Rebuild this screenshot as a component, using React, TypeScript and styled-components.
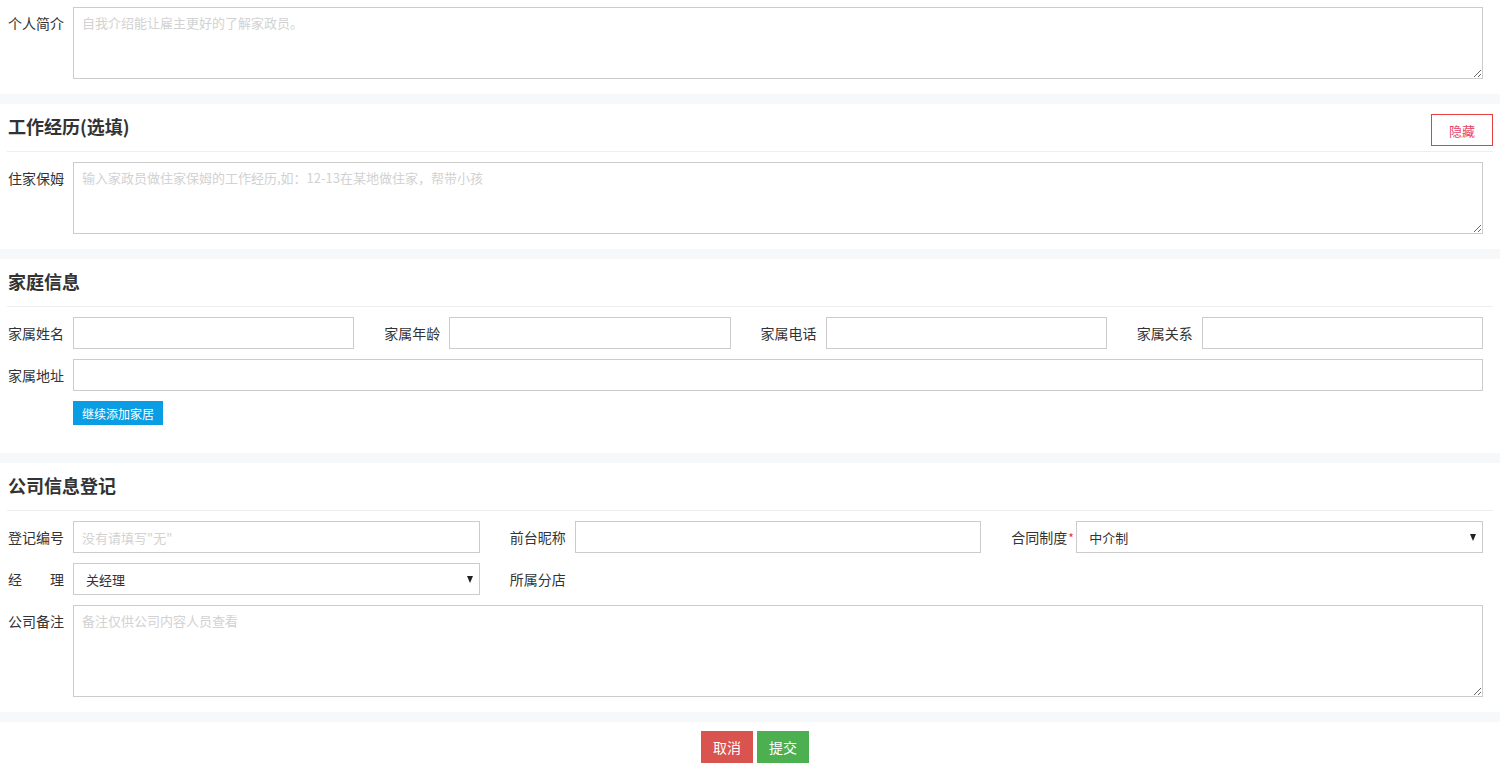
import React from 'react'
import styled, { createGlobalStyle } from 'styled-components'

const GlobalStyle = createGlobalStyle`
  body {
    margin: 0;
    background: #fff;
    font-family: "Noto Sans CJK SC", "Liberation Sans", sans-serif;
    color: #333;
  }
  * { box-sizing: border-box; }
`

const Page = styled.div`
  width: 1500px;
  display: flex;
  flex-direction: column;
`

const Section = styled.section<{ $top?: number }>`
  display: flex;
  flex-direction: column;
  gap: 10px;
  padding-top: ${(p) => p.$top ?? 0}px;
  padding-bottom: 15px;
`

const Band = styled.div`
  height: 10px;
  background: #f7f8fa;
`

const Header = styled.div`
  display: flex;
  align-items: center;
  justify-content: space-between;
  height: 48px;
  padding-top: 10px;
  padding-bottom: 5px;
  margin: 0 7px;
  border-bottom: 1px solid #eee;
`

const Title = styled.h3`
  margin: 0 0 8px 1px;
  font-size: 18px;
  line-height: 24px;
  font-weight: 700;
  color: #333;
`

const HideButton = styled.button`
  width: 62px;
  height: 32px;
  border: 1px solid #e53f3f;
  background: #fff;
  color: #e8456b;
  font-family: inherit;
  font-size: 13px;
  padding: 0;
  cursor: pointer;
`

const Grid = styled.div<{ $cols: number }>`
  display: grid;
  grid-template-columns: repeat(${(p) => p.$cols}, minmax(0, 1fr));
  column-gap: 30px;
  padding: 0 17px 0 8px;
`

const Field = styled.div<{ $top?: boolean }>`
  display: flex;
  align-items: ${(p) => (p.$top ? 'flex-start' : 'center')};
  min-height: 32px;
`

const Label = styled.label<{ $top?: boolean; $justify?: boolean }>`
  flex: 0 0 65px;
  font-size: 14px;
  line-height: 20px;
  color: #333;
  white-space: nowrap;
  padding-top: ${(p) => (p.$top ? 6 : 0)}px;
  ${(p) =>
    p.$justify &&
    `
    display: flex;
    justify-content: space-between;
    padding-right: 9px;
  `}
`

const Star = styled.span`
  color: #e33;
  font-size: 12px;
  margin-left: 1px;
`

const TextInput = styled.input`
  flex: 1;
  min-width: 0;
  height: 32px;
  border: 1px solid #ccc;
  padding: 0 8px;
  font-family: inherit;
  font-size: 13px;
  color: #333;
  outline: none;
  &::placeholder { color: #d2d2d2; }
`

const TextArea = styled.textarea<{ $h: number }>`
  flex: 1;
  min-width: 0;
  height: ${(p) => p.$h}px;
  border: 1px solid #ccc;
  padding: 5px 8px;
  font-family: inherit;
  font-size: 13px;
  line-height: 20px;
  color: #333;
  outline: none;
  &::placeholder { color: #d2d2d2; }
`

const SelectWrap = styled.div`
  flex: 1;
  min-width: 0;
  position: relative;
  display: flex;
`

const Select = styled.select`
  flex: 1;
  min-width: 0;
  height: 32px;
  border: 1px solid #ccc;
  background: #fff;
  padding: 0 12px;
  font-family: inherit;
  font-size: 13px;
  color: #333;
  appearance: none;
  outline: none;
`

const Arrow = styled.span`
  position: absolute;
  right: 7px;
  top: 13px;
  width: 0;
  height: 0;
  border-left: 3.5px solid transparent;
  border-right: 3.5px solid transparent;
  border-top: 7px solid #222;
  pointer-events: none;
`

const Plain = styled.span`
  font-size: 14px;
  color: #333;
`

const ActionRow = styled.div`
  display: flex;
  padding-left: 73px;
  margin-bottom: 13px;
`

const SmallButton = styled.button`
  height: 24px;
  padding: 0 9px;
  border: none;
  background: #0b9de3;
  color: #fff;
  font-family: inherit;
  font-size: 12px;
  cursor: pointer;
`

const Footer = styled.div`
  display: flex;
  justify-content: center;
  gap: 4px;
  padding: 9px 0 5px 10px;
`

const FooterButton = styled.button<{ $tone: 'danger' | 'success' }>`
  width: 52px;
  height: 32px;
  border: none;
  color: #fff;
  font-family: inherit;
  font-size: 14px;
  background: ${(p) => (p.$tone === 'danger' ? '#d9534f' : '#4caf50')};
  cursor: pointer;
`

function Dropdown({ value, options }: { value: string; options: string[] }) {
  return (
    <SelectWrap>
      <Select defaultValue={value}>
        {options.map((o) => (
          <option key={o}>{o}</option>
        ))}
      </Select>
      <Arrow />
    </SelectWrap>
  )
}

export default function App() {
  return (
    <Page>
      <GlobalStyle />

      <Section $top={7}>
        <Grid $cols={1}>
          <Field $top>
            <Label $top>个人简介</Label>
            <TextArea $h={72} placeholder="自我介绍能让雇主更好的了解家政员。" />
          </Field>
        </Grid>
      </Section>
      <Band />

      <Section>
        <Header>
          <Title>工作经历(选填)</Title>
          <HideButton>隐藏</HideButton>
        </Header>
        <Grid $cols={1}>
          <Field $top>
            <Label $top>住家保姆</Label>
            <TextArea $h={72} placeholder="输入家政员做住家保姆的工作经历,如：12-13在某地做住家，帮带小孩" />
          </Field>
        </Grid>
      </Section>
      <Band />

      <Section>
        <Header>
          <Title>家庭信息</Title>
        </Header>
        <Grid $cols={4}>
          <Field>
            <Label>家属姓名</Label>
            <TextInput />
          </Field>
          <Field>
            <Label>家属年龄</Label>
            <TextInput />
          </Field>
          <Field>
            <Label>家属电话</Label>
            <TextInput />
          </Field>
          <Field>
            <Label>家属关系</Label>
            <TextInput />
          </Field>
        </Grid>
        <Grid $cols={1}>
          <Field>
            <Label>家属地址</Label>
            <TextInput />
          </Field>
        </Grid>
        <ActionRow>
          <SmallButton>继续添加家居</SmallButton>
        </ActionRow>
      </Section>
      <Band />

      <Section>
        <Header>
          <Title>公司信息登记</Title>
        </Header>
        <Grid $cols={3}>
          <Field>
            <Label>登记编号</Label>
            <TextInput placeholder={'没有请填写"无"'} />
          </Field>
          <Field>
            <Label>前台昵称</Label>
            <TextInput />
          </Field>
          <Field>
            <Label>
              合同制度<Star>*</Star>
            </Label>
            <Dropdown value="中介制" options={['中介制', '员工制']} />
          </Field>
        </Grid>
        <Grid $cols={3}>
          <Field>
            <Label $justify>
              <span>经</span>
              <span>理</span>
            </Label>
            <Dropdown value="关经理" options={['关经理']} />
          </Field>
          <Field>
            <Plain>所属分店</Plain>
          </Field>
          <div />
        </Grid>
        <Grid $cols={1}>
          <Field $top>
            <Label $top>公司备注</Label>
            <TextArea $h={92} placeholder="备注仅供公司内容人员查看" />
          </Field>
        </Grid>
      </Section>
      <Band />

      <Footer>
        <FooterButton $tone="danger">取消</FooterButton>
        <FooterButton $tone="success">提交</FooterButton>
      </Footer>
    </Page>
  )
}
